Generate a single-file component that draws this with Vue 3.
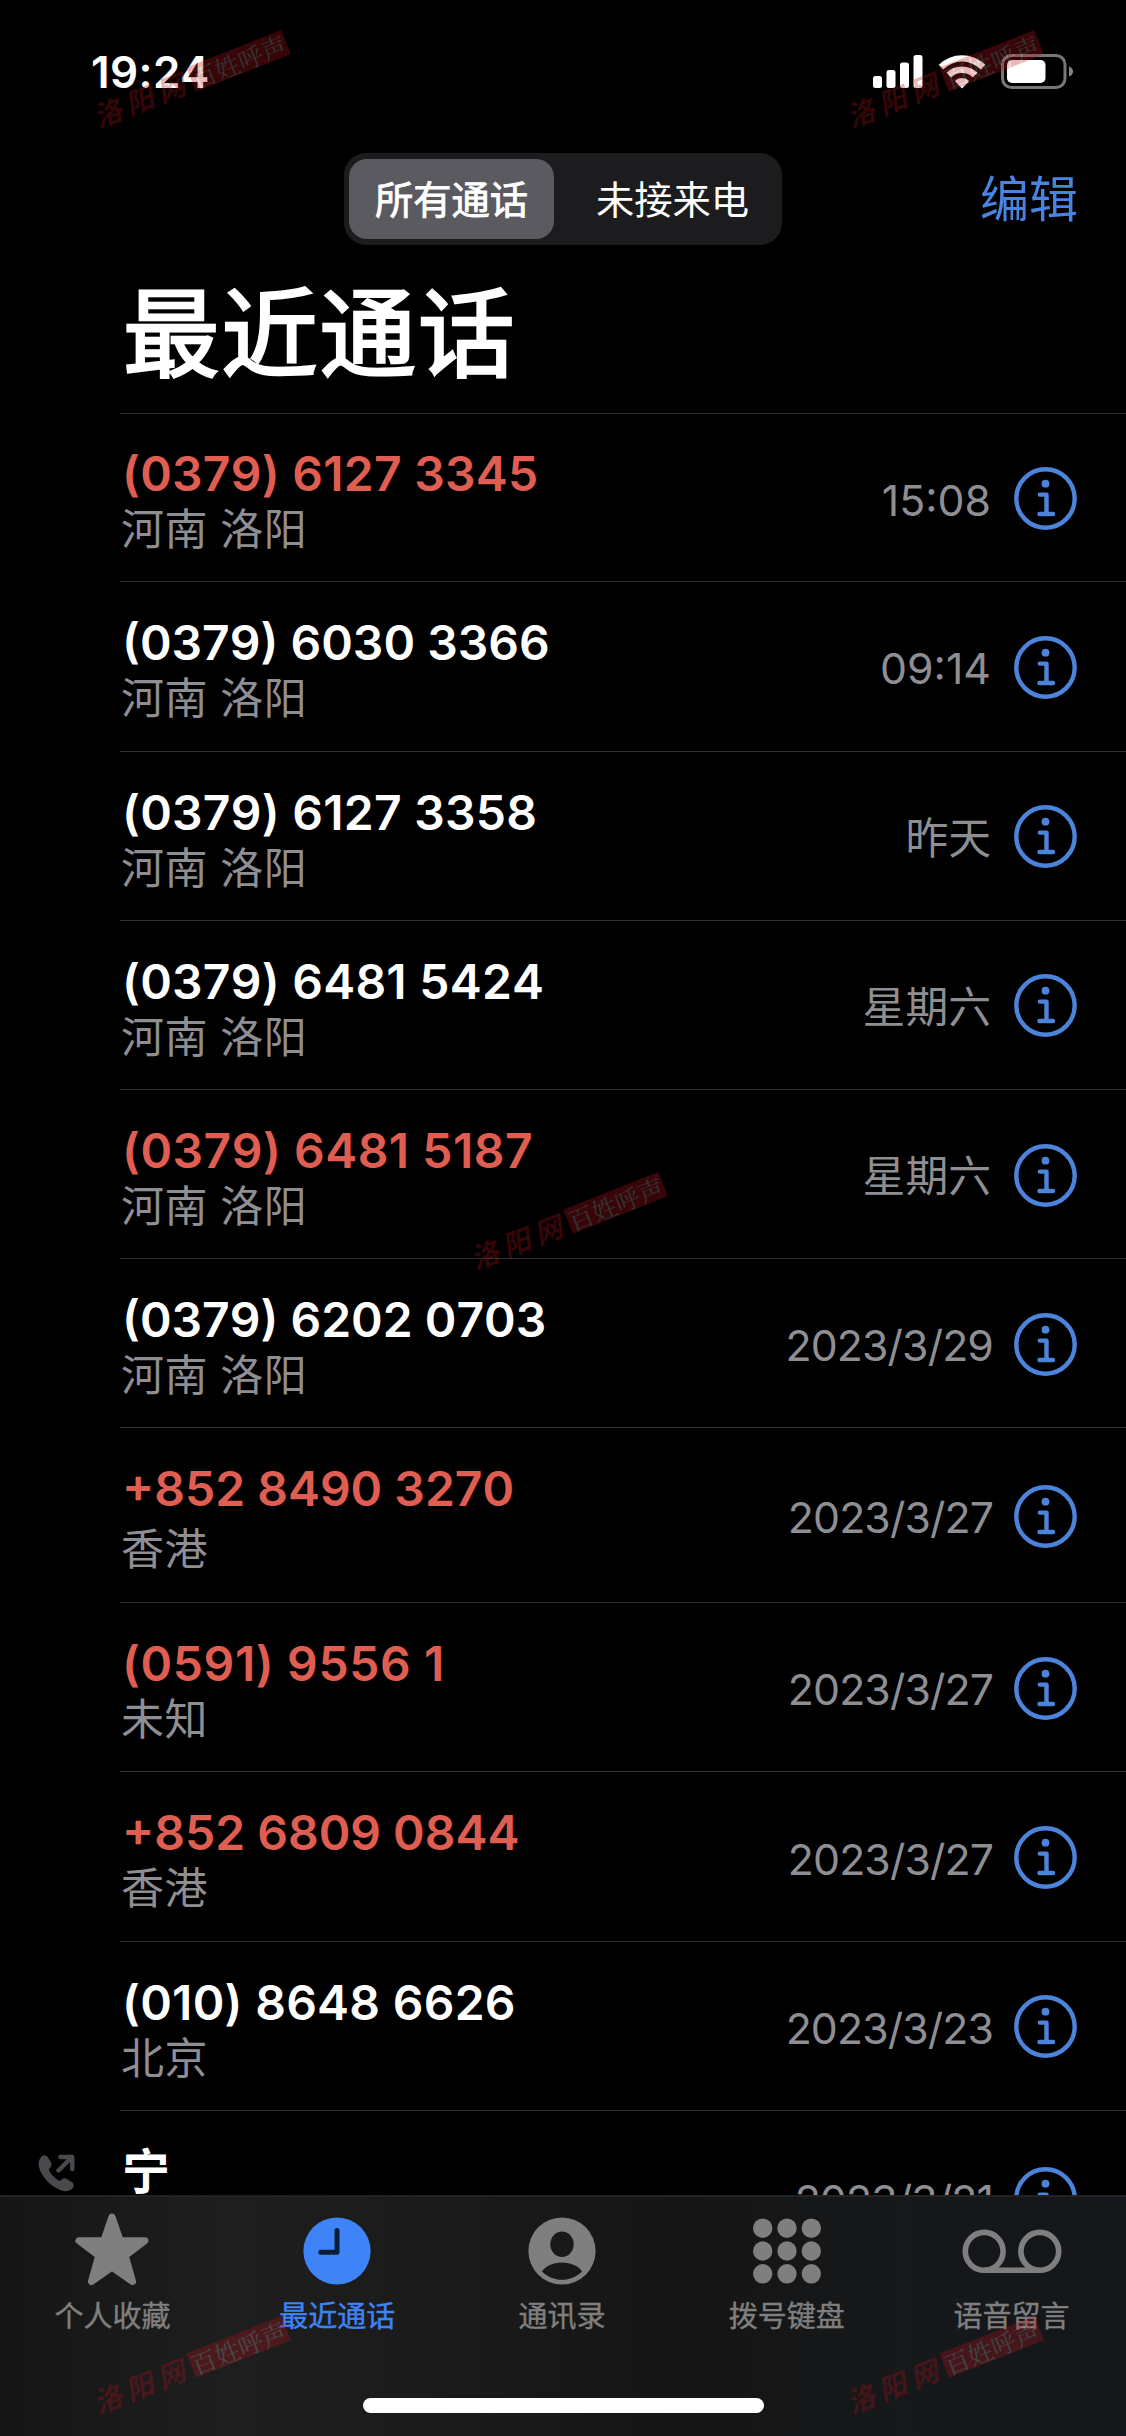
<template>
  <div class="phone">
    <header class="status-bar">
      <span class="clock">19:24</span>
      <div class="status-icons">
        <svg class="signal" viewBox="0 0 50 34">
          <rect x="0" y="22" width="9" height="12" rx="2.5" />
          <rect x="13.5" y="16" width="9" height="18" rx="2.5" />
          <rect x="27" y="8.5" width="9" height="25.5" rx="2.5" />
          <rect x="40.5" y="1" width="9" height="33" rx="2.5" />
        </svg>
        <svg class="wifi" viewBox="0 0 48 35">
          <path d="M0.8 10.8a33 33 0 0 1 46.4 0l-4.4 4.6a26.6 26.6 0 0 0-37.6 0z" />
          <path d="M8.6 18.8a21.8 21.8 0 0 1 30.8 0l-4.6 4.7a15.3 15.3 0 0 0-21.6 0z" />
          <path d="M16.8 27a10.2 10.2 0 0 1 14.4 0l-7.2 7.6z" />
        </svg>
        <svg class="battery" viewBox="0 0 73 35">
          <rect class="battery-case" x="1.5" y="1.5" width="62.5" height="32" rx="9" />
          <rect x="6" y="6" width="38.5" height="23" rx="5" />
          <path class="battery-tip" d="M68 12.4c5.4 1.6 5.4 8.6 0 10.2z" />
        </svg>
      </div>
    </header>

    <nav class="nav-bar">
      <div class="segmented">
        <button
          v-for="filter in filters"
          :key="filter"
          class="segment"
          :class="{ active: filter === activeFilter }"
          @click="activeFilter = filter"
        >
          {{ filter }}
        </button>
      </div>
      <button class="btn-edit">编辑</button>
    </nav>

    <h1 class="page-title">最近通话</h1>

    <ul class="call-list">
      <li v-for="(call, i) in calls" :key="i" class="call-row" :class="{ tall: call.tall }">
        <div class="call-type">
          <svg v-if="call.outgoing" class="outgoing-icon" viewBox="0 0 38 38">
            <path
              class="handset"
              d="M3.3 2.6C5.8-.2 8.8.6 10.6 3.6l2.7 4.4c1.4 2.4.6 4-1 5.6-1.3 1.3-1.3 2.2-.5 3.6 2.3 3.9 5.2 6.8 8.9 9.2 1.4.9 2.3.8 3.5-.4 1.6-1.6 3.3-2.3 5.5-.9l4.5 2.9c2.9 1.9 3.5 4.5.9 7-3.3 3.2-7.6 3.5-12.4 1.5C12.7 32.3 5 24.2 1.7 15.2-.1 10.2.2 6 3.3 2.6z"
            />
            <path class="arrow" d="M21 16.5L35 2.5M23 2.5h12.2v12.5" />
          </svg>
        </div>
        <div class="call-body">
          <div class="call-info">
            <div class="number" :class="{ missed: call.missed }" :style="{ letterSpacing: spacing(call.number) }">
              {{ call.number }}
            </div>
            <div v-if="call.place" class="place">{{ call.place }}</div>
          </div>
          <div class="call-time" :class="{ date: call.time.includes('/') }">{{ call.time }}</div>
          <svg class="info-icon" viewBox="0 0 63 63">
            <circle class="ring" cx="31.5" cy="31.5" r="29.2" />
            <circle class="dot" cx="31.5" cy="16.7" r="3.9" />
            <path class="stem" d="M25.8 27.6h6.7v19.2M25.5 47h13.5" />
          </svg>
        </div>
      </li>
    </ul>

    <footer class="tab-bar">
      <div class="tabs">
        <div v-for="tab in tabs" :key="tab.id" class="tab" :class="{ active: tab.id === 'recents' }">
          <svg class="tab-icon" viewBox="0 0 104 76">
            <path
              v-if="tab.id === 'favorites'"
              class="star"
              d="M52 5L60.3 28.8h24.7L65.2 43.6l7.4 25.9L52 55.2 31.4 69.5l7.4-25.9L19 28.8h24.7z"
            />
            <template v-else-if="tab.id === 'recents'">
              <circle cx="52" cy="39" r="33.6" />
              <path class="hands" d="M52 18.5v21.8H35.8" />
            </template>
            <template v-else-if="tab.id === 'contacts'">
              <circle cx="52" cy="39" r="33.6" />
              <ellipse class="cutout" cx="52" cy="32.3" rx="11.7" ry="12.8" />
              <path class="cutout" d="M32 59.5c3.5-5.5 11-9 20-9s16.5 3.5 20 9C66.5 65 59.5 67.8 52 67.8S37.5 65 32 59.5z" />
            </template>
            <template v-else-if="tab.id === 'keypad'">
              <circle v-for="n in 9" :key="n" :cx="27.7 + ((n - 1) % 3) * 24.3" :cy="16.2 + Math.floor((n - 1) / 3) * 22.8" r="9.7" />
            </template>
            <template v-else>
              <circle class="reel" cx="24.2" cy="39.3" r="18.9" />
              <circle class="reel" cx="79.8" cy="39.3" r="18.9" />
              <path class="reel" d="M24.2 58.2h55.6" />
            </template>
          </svg>
          <span class="tab-label">{{ tab.label }}</span>
        </div>
      </div>
      <div class="home-indicator"></div>
    </footer>

    <!-- Marca d'água repetida sobre a tela -->
    <div v-for="spot in ['top-left', 'top-right', 'middle', 'bottom-left', 'bottom-right']" :key="spot" class="watermark" :class="spot">
      <span class="mark-site">洛阳网</span>
      <span class="mark-board">百姓呼声</span>
    </div>
  </div>
</template>

<script setup>
import { ref } from 'vue'

const filters = ['所有通话', '未接来电']
const activeFilter = ref('所有通话')

const calls = [
  { number: '(0379) 6127 3345', place: '河南 洛阳', time: '15:08', missed: true },
  { number: '(0379) 6030 3366', place: '河南 洛阳', time: '09:14' },
  { number: '(0379) 6127 3358', place: '河南 洛阳', time: '昨天' },
  { number: '(0379) 6481 5424', place: '河南 洛阳', time: '星期六' },
  { number: '(0379) 6481 5187', place: '河南 洛阳', time: '星期六', missed: true },
  { number: '(0379) 6202 0703', place: '河南 洛阳', time: '2023/3/29' },
  { number: '+852 8490 3270', place: '香港', time: '2023/3/27', missed: true, tall: true },
  { number: '(0591) 9556 1', place: '未知', time: '2023/3/27', missed: true },
  { number: '+852 6809 0844', place: '香港', time: '2023/3/27', missed: true },
  { number: '(010) 8648 6626', place: '北京', time: '2023/3/23' },
  { number: '宁', place: '', time: '2023/3/21', outgoing: true, tall: true },
]

const tabs = [
  { id: 'favorites', label: '个人收藏' },
  { id: 'recents', label: '最近通话' },
  { id: 'contacts', label: '通讯录' },
  { id: 'keypad', label: '拨号键盘' },
  { id: 'voicemail', label: '语音留言' },
]

// O "1" da Inter é estreito, então compensa no espaçamento do número
const spacing = (number) => {
  const ones = number.split('1').length - 1
  return `${((ones * 4) / number.length).toFixed(2)}px`
}
</script>

<style>
body {
  background: #000;
}
</style>

<style scoped>
.phone {
  position: relative;
  display: flex;
  flex-direction: column;
  width: 1126px;
  height: 2436px;
  overflow: hidden;
  background: #000;
  color: #fff;
  font-family: Inter, 'Noto Sans CJK SC', sans-serif;
}

button {
  border: 0;
  padding: 0;
  background: none;
  color: inherit;
  font-family: inherit;
}

/* --- STATUS --- */
.status-bar {
  display: flex;
  justify-content: space-between;
  box-sizing: border-box;
  height: 153px;
  padding: 44px 52px 0 91px;
}

.clock {
  font-size: 44px;
  font-weight: 560;
  letter-spacing: 0.4px;
  line-height: 56px;
}

.status-icons {
  display: flex;
  align-items: flex-start;
  padding-top: 10px;
}

.status-icons svg {
  fill: #fff;
}

.signal {
  width: 50px;
  height: 34px;
}

.wifi {
  width: 48px;
  height: 35px;
  margin: 0 15px;
}

.battery {
  width: 73px;
  height: 35px;
}

.status-icons .battery-case {
  fill: none;
  stroke: #777;
  stroke-width: 3;
}

.status-icons .battery-tip {
  fill: #858585;
}

/* --- NAV --- */
.nav-bar {
  display: grid;
  grid-template-columns: 1fr 438px 1fr;
  align-items: center;
  height: 92px;
  padding-right: 48px;
  padding-left: 48px;
}

.segmented {
  grid-column: 2;
  display: grid;
  grid-template-columns: 205px 1fr;
  gap: 14px;
  box-sizing: border-box;
  height: 92px;
  padding: 6px 5px;
  border-radius: 22px;
  background: #1c1c1f;
}

.segment {
  padding-top: 2px;
  border-radius: 18px;
  font-size: 38.3px;
  line-height: 76px;
}

.segment.active {
  background: #5b5a60;
  -webkit-text-stroke: 0.8px #fff;
}

.btn-edit {
  justify-self: end;
  padding-top: 2px;
  color: #4884e2;
  font-size: 49px;
  line-height: 60px;
}

.page-title {
  margin: 27px 0 0 123px;
  height: 141px;
  font-size: 96.5px;
  font-weight: 400;
  letter-spacing: 1.8px;
  line-height: 124px;
  -webkit-text-stroke: 2.6px #fff;
}

/* --- LISTA --- */
.call-list {
  flex: 1;
  min-height: 0;
  margin: 0;
  padding: 0;
  overflow: hidden;
  list-style: none;
}

.call-row {
  display: grid;
  grid-template-columns: 120px 1fr;
  height: 169.2px;
}

.call-row:first-child {
  height: 168.4px;
}

.call-row.tall {
  height: 174.9px;
}

.call-type {
  padding: 44px 0 0 38px;
}

.outgoing-icon {
  display: block;
  width: 37px;
  height: 38px;
}

.handset {
  fill: #4a494e;
}

.arrow {
  fill: none;
  stroke: #4a494e;
  stroke-width: 4.5;
  stroke-linecap: round;
  stroke-linejoin: round;
}

.call-body {
  display: flex;
  align-items: center;
  padding-right: 49px;
  border-top: 1px solid #303032;
}

.call-info {
  flex: 1;
  align-self: flex-start;
  padding-top: 31px;
}

.call-row:first-child .call-info {
  padding-top: 30px;
}

.number {
  padding-left: 2px;
  font-size: 48px;
  font-weight: 600;
  font-kerning: none;
  line-height: 60px;
}

.number.missed {
  color: #e05e51;
}

.place {
  padding-left: 1px;
  color: #8e8e93;
  font-size: 43px;
  letter-spacing: 0.4px;
  line-height: 50px;
}

.tall .place {
  padding-top: 5px;
}

.call-time {
  padding-top: 6px;
  color: #8e8e93;
  font-size: 42.8px;
  line-height: 50px;
}

.call-time.date {
  margin-right: -2px;
  letter-spacing: -0.9px;
}

.info-icon {
  width: 63px;
  height: 63px;
  margin-top: 2px;
  margin-left: 23px;
}

.ring,
.stem {
  fill: none;
  stroke: #4c84dc;
  stroke-width: 4.4;
}

.stem {
  stroke-linecap: round;
  stroke-linejoin: round;
}

.dot {
  fill: #4c84dc;
}

/* --- ABAS --- */
.tab-bar {
  display: flex;
  flex-direction: column;
  align-items: center;
  box-sizing: border-box;
  height: 241px;
  border-top: 2px solid #232323;
  background: linear-gradient(90deg, #151515 0%, #1e1e1e 20%, #1b1b1b 38%, #151515 60%, #16181a 80%, #14171b 100%);
}

.tabs {
  display: grid;
  grid-template-columns: repeat(5, 1fr);
  box-sizing: border-box;
  width: 100%;
  height: 201px;
  padding-top: 15px;
  padding-right: 2px;
}

.tab {
  display: flex;
  flex-direction: column;
  align-items: center;
  color: #7f7f7f;
}

.tab.active {
  color: #3e84f6;
}

.tab-icon {
  width: 104px;
  height: 76px;
  fill: currentColor;
}

.star {
  stroke: currentColor;
  stroke-width: 7;
  stroke-linejoin: round;
}

.hands {
  fill: none;
  stroke: #0c1c38;
  stroke-width: 5;
  stroke-linecap: round;
  stroke-linejoin: round;
}

.cutout {
  fill: #191919;
}

.reel {
  fill: none;
  stroke: currentColor;
  stroke-width: 5.6;
}

.tab-label {
  margin-top: 9px;
  font-size: 29px;
  line-height: 40px;
  -webkit-text-stroke: 0.4px currentColor;
}

.home-indicator {
  width: 401px;
  height: 15px;
  border-radius: 8px;
  background: #fff;
}

/* --- MARCA D'ÁGUA --- */
.watermark {
  position: absolute;
  display: flex;
  align-items: center;
  gap: 2px;
  width: 206px;
  height: 27px;
  opacity: 0.3;
  transform: rotate(-21.5deg);
  white-space: nowrap;
}

.mark-site {
  width: 102px;
  color: #b0141c;
  font-family: 'Noto Sans CJK SC', sans-serif;
  font-size: 28px;
  font-style: italic;
  font-weight: 700;
  letter-spacing: 6px;
  line-height: 27px;
}

.mark-board {
  width: 102px;
  background: #b8141e;
  color: #a8a8a8;
  font-family: 'Noto Serif CJK SC', 'Noto Sans CJK SC', serif;
  font-size: 25px;
  line-height: 26px;
  text-align: center;
}

.top-left {
  top: 66px;
  left: 87px;
}

.top-right {
  top: 66px;
  left: 840px;
}

.middle {
  top: 1208px;
  left: 464px;
}

.bottom-left {
  top: 2352px;
  left: 87px;
}

.bottom-right {
  top: 2352px;
  left: 840px;
}
</style>
